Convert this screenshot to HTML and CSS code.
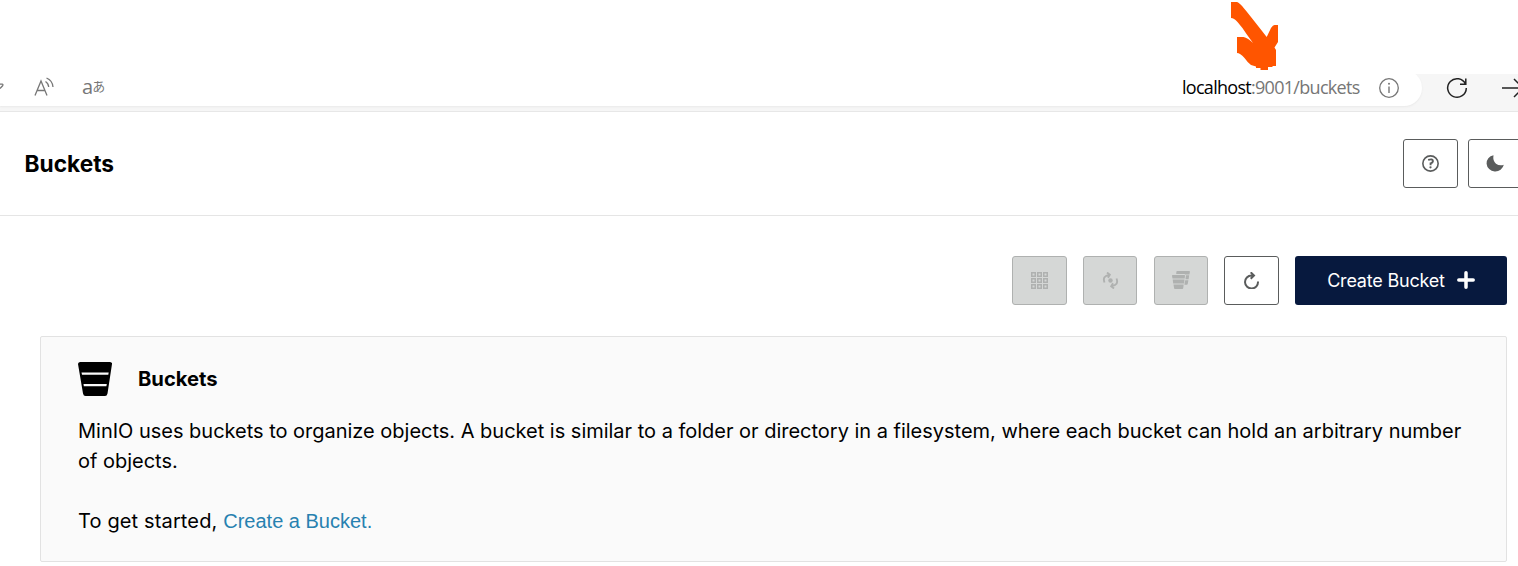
FILE: index.html
```html
<!DOCTYPE html>
<html lang="en">
<head>
<meta charset="utf-8">
<title>Buckets</title>
<link rel="stylesheet" href="styles.css">
</head>
<body>
<div class="browser">
  <div class="address">
    <div class="tools">
      <svg class="edge" width="8" height="14" viewBox="0 0 8 14"><path d="M0 3.200H2.300Q3.500 3.500 2.600 4.800L0 7.500" fill="none" stroke="#777" stroke-width="1.300"/></svg>
      <svg class="read" width="22" height="22" viewBox="0 0 22 22" fill="none" stroke="#777" stroke-width="1.300"><path d="M1 19.500 7 5 13 19.500M3.100 14.500H10.900M11.500 5.500Q14.500 7.500 14.700 11M12.500 2Q18.500 4.500 19 11"/></svg>
      <span class="translate"><span class="latin">a</span><span class="kana">あ</span></span>
    </div>
    <div class="url"><span class="host">localhost</span>:9001/buckets</div>
    <svg class="info" width="22" height="22" viewBox="0 0 22 22"><circle cx="11" cy="11" r="9.300" fill="none" stroke="#767676" stroke-width="1.300"/><path d="M11 9.500V16" stroke="#767676" stroke-width="1.400"/><circle cx="11" cy="6.700" r="1" fill="#767676"/></svg>
  </div>
  <svg class="reload" width="24" height="24" viewBox="0 0 24 24" fill="none" stroke="#222" stroke-width="1.500"><path d="M20.500 8.200A9.300 9.300 0 1 0 21.300 12M20.800 2.500V8.300H15"/></svg>
  <svg class="forward" width="24" height="24" viewBox="0 0 24 24" fill="none" stroke="#222" stroke-width="1.500"><path d="M1 12H22M13 3 22 12 13 21"/></svg>
</div>
<svg class="pointer" width="50" height="70" viewBox="0 0 50 70"><path fill="#ff5500" d="M3 2H9Q11 2.500 14.500 6.500Q20 13 38.700 37L43 28Q45 25 46.500 25H50V42L46.500 47.500 48 50V66H44.500V67H40V70H32.500V68H28V66.500L23 65Q20 63 16.500 58Q12 53 9 53V37H15.500Q20 38 25 43L18.500 34Q14 27 9.500 22Q6 18 3 18Z"/></svg>
<header class="header">
  <h1>Buckets</h1>
  <div class="actions">
    <button class="btn" aria-label="Help"><svg width="17" height="17" viewBox="0 0 18 18" fill="none" stroke="#5a5c5c" stroke-width="1.700"><circle cx="9" cy="9" r="8.100"/><path d="M6.500 5.200Q11.700 3.600 11.600 6.500Q11.500 8.300 9.100 8.800V10.800" stroke-width="2"/><circle cx="9" cy="13" r="1.200" fill="#5a5c5c" stroke="none"/></svg></button>
    <button class="btn" aria-label="Dark mode"><svg width="18" height="17" viewBox="0 0 18 18" preserveAspectRatio="none"><path fill="#5a5c5c" d="M7.500.2A8.700 8.700 0 1 0 17.800 10.400Q13.500 11.900 10 9.200Q6.500 6 7.500.2Z"/></svg></button>
  </div>
</header>
<main class="content">
  <div class="toolbar">
    <button class="btn off" aria-label="Select"><svg width="17" height="17" viewBox="0 0 17 17" fill="none" stroke="#afb1b0" stroke-width="1.500"><path d="M.75.75h3.500v3.500h-3.500zM6.750.75h3.500v3.500h-3.500zM12.750.75h3.500v3.500h-3.500zM.75 6.750h3.500v3.500h-3.500zM6.750 6.750h3.500v3.500h-3.500zM12.750 6.750h3.500v3.500h-3.500zM.75 12.750h3.500v3.500h-3.500zM6.750 12.750h3.500v3.500h-3.500zM12.750 12.750h3.500v3.500h-3.500z"/></svg></button>
    <button class="btn off small" aria-label="Lifecycle"><svg width="17" height="17" viewBox="0 0 17 17"><g fill="none" stroke="#afb1b0" stroke-width="1.900"><path d="M2.500 10.500Q0 4 7.500 2.900M14.500 6.500Q17 13 9.500 14.100M5 .5 7.800 2.800 6 5.700M12 16.500 9.200 14.200 11 11.300"/></g><circle cx="8.500" cy="8.500" r="2.200" fill="#afb1b0"/></svg></button>
    <button class="btn off small third" aria-label="Replication"><svg width="18" height="18" viewBox="0 0 18 18" fill="#afb1b0"><path d="M5 0H17.300Q18 .2 17.900 1L17.400 3.500H13L12.700 3H4.200L4.400.7Q4.500 0 5 0ZM14 4.300H17.200L16.600 8.200H13.500ZM13.200 9.200H16.400L15.700 13Q15.500 13.800 14.800 13.800H12.400ZM.7 4H12.400Q13.100 4.100 13 4.900L12.700 7.500H.5L0 4.900Q-.1 4.100.7 4ZM.7 8.500H12.500L12 12.400H1.200ZM1.500 13.400H11.700L11.200 17.300Q11 18 10.400 18H2.800Q2.200 17.900 2.100 17.300Z"/></svg></button>
    <button class="btn refresh" aria-label="Refresh"><svg width="17" height="17" viewBox="0 0 17 17"><path d="M10.500 3.500H8.500A6.500 6.500 0 1 0 15 9.500M7.700.3 11 3.500 7.700 6.700" fill="none" stroke="#5a5c5c" stroke-width="2"/></svg></button>
    <button class="create"><span>Create Bucket</span><svg width="18" height="18" viewBox="0 0 18 18"><path d="M9 1.800V16.200M1.800 9H16.200" stroke="#fff" stroke-width="3.500" stroke-linecap="round"/></svg></button>
  </div>
  <section class="card">
    <div class="card-title">
      <svg width="34" height="34" viewBox="0 0 34 34"><path d="M2 0H32Q34.300.3 34 2L29.500 31.500Q29 34 27 34H7.500Q5.500 34 5 31.500L0 2Q0 .3 2 0Z"/><path fill="#fafafa" d="M3.500 10.500H30.700L30.300 12.800H4ZM5.500 22H28.800L28.400 24.300H5.800Z"/></svg>
      <h2>Buckets</h2>
    </div>
    <p class="desc">MinIO uses buckets to organize objects. A bucket is similar to a folder or directory in a filesystem, where each bucket can hold an arbitrary number<br>of objects.</p>
    <p class="start"><span class="lead">To get started, </span><a>Create a Bucket.</a></p>
  </section>
</main>
</body>
</html>
```
FILE: styles.css
```css
* { box-sizing: border-box; }
body {
  margin: 0;
  height: 566px;
  padding-top: 74px;
  overflow: hidden;
  background: #fff;
  color: #000;
  font-family: Inter, sans-serif;
}
svg { display: block; flex: none; }
h1, h2, p { margin: 0; }
.browser {
  display: flex;
  align-items: flex-start;
  height: 38px;
  background: #f6f6f6;
  border-bottom: 1px solid #e7e7e7;
  clip-path: inset(0);
}
.address {
  display: flex;
  align-items: center;
  flex: none;
  width: 1422px;
  height: 36px;
  margin-top: -4px;
  padding-right: 22px;
  border-radius: 0 18px 18px 0;
  background: #fff;
  box-shadow: 0 1px 2px #e9e9e9;
}
.tools { display: flex; align-items: center; flex: 1; }
.read { margin-left: 26px; margin-top: -3px; }
.translate { display: flex; align-items: center; margin-left: 26px; color: #777; }
.latin { font: 20px/20px "Open Sans", sans-serif; margin-top: -3px; }
.kana { margin: -4px 0 0 -1px; font: 13px/20px "Noto Sans CJK JP", sans-serif; }
.url {
  width: 178px;
  margin-top: -2px;
  white-space: nowrap;
  font: 18px/24px "Open Sans", sans-serif;
  letter-spacing: -0.71px;
  color: #767676;
}
.host { color: #000; }
.info { margin-left: 18px; }
.reload { margin: 2px 0 0 23px; }
.forward { margin: 2px 0 0 32px; }
.pointer { position: absolute; left: 1228px; top: 0; }
.header {
  display: flex;
  align-items: center;
  justify-content: space-between;
  height: 104px;
  padding-left: 24.5px;
  border-bottom: 1px solid #e5e5e5;
}
h1 { font-size: 22.7px; line-height: 30px; font-weight: 700; }
.actions { display: flex; gap: 10px; margin-right: -5px; }
.btn {
  display: flex;
  align-items: center;
  justify-content: center;
  width: 55px;
  height: 49px;
  padding: 0;
  border: 1px solid #5a5c5c;
  border-radius: 3px;
  background: #fff;
}
.actions .btn:last-child { padding-right: 2px; }
.off { border-color: #afb1b0; background: #d5d7d6; }
.small { width: 54px; }
.content { padding: 40px 11px 0 40px; }
.toolbar { display: flex; justify-content: flex-end; gap: 16px; }
.third { margin-left: 1px; padding-bottom: 1px; }
.refresh { padding-bottom: 1px; }
.create {
  display: flex;
  align-items: center;
  justify-content: center;
  gap: 12px;
  width: 212px;
  height: 49px;
  padding: 0 0 1px;
  border: 0;
  border-radius: 3px;
  background: #07193e;
  color: #fff;
  font: 18px/22px Inter, sans-serif;
  letter-spacing: -0.2px;
}
.create span { margin-top: 1px; }
.card {
  height: 226px;
  margin-top: 31px;
  padding: 25px 37px;
  border: 1px solid #e2e2e2;
  border-radius: 2px;
  background: #fafafa;
}
.card-title { display: flex; align-items: center; gap: 26px; height: 34px; }
h2 { font-size: 20.2px; line-height: 26px; font-weight: 700; }
.desc, .start { font-size: 20px; line-height: 30px; white-space: nowrap; }
.desc { margin-top: 20px; letter-spacing: -0.014px; }
.start { margin-top: 30px; }
.lead { letter-spacing: 0.14px; }
.start a { color: #2781b0; font-family: "Liberation Sans", sans-serif; }
```
